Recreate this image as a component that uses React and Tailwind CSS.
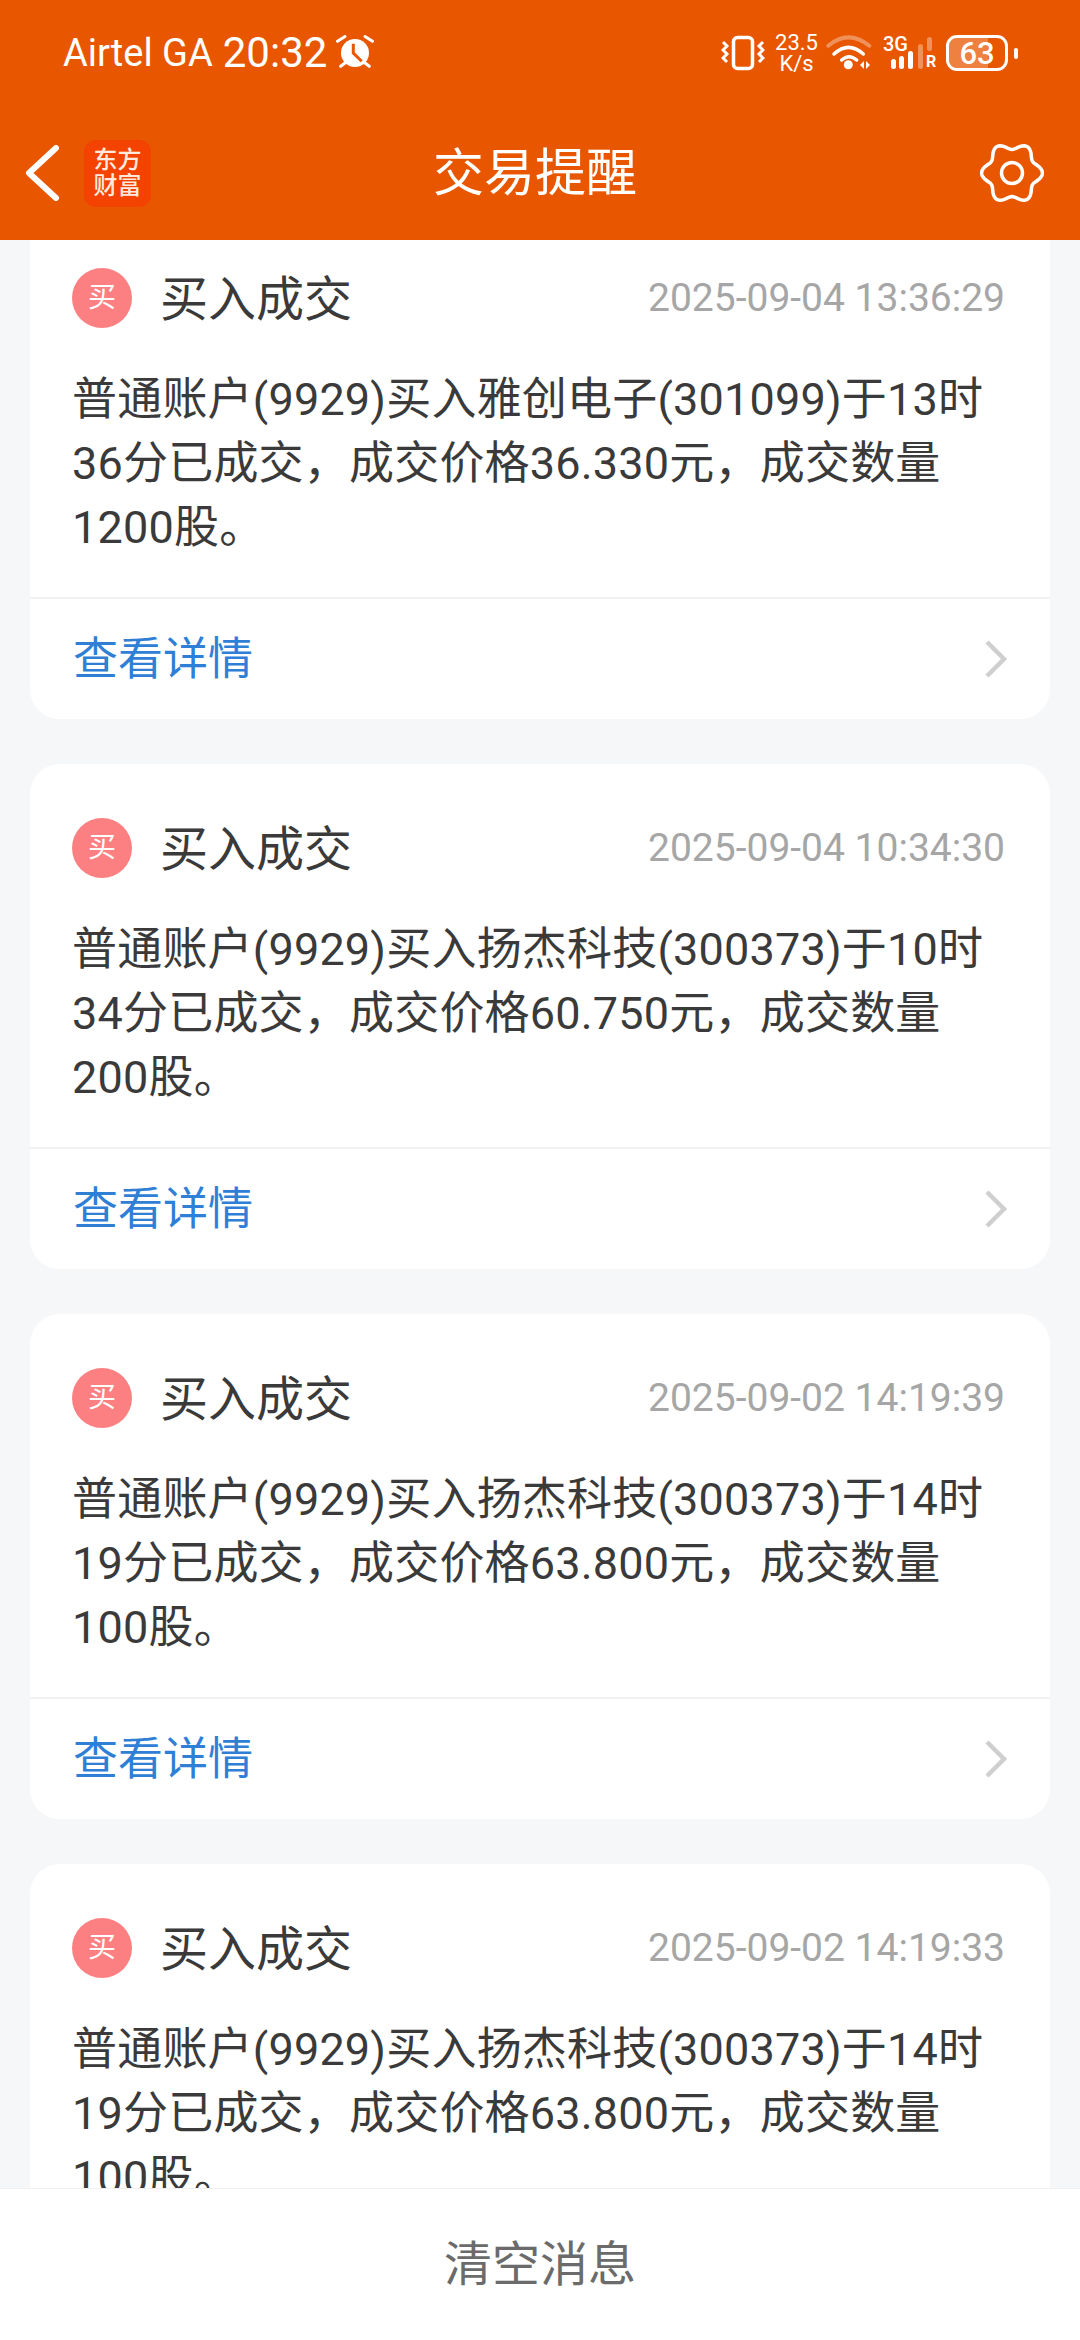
import React from "react";

const messages = [
  { time: "2025-09-04 13:36:29", stock: "雅创电子(301099)", hour: "13", min: "36", price: "36.330", qty: "1200" },
  { time: "2025-09-04 10:34:30", stock: "扬杰科技(300373)", hour: "10", min: "34", price: "60.750", qty: "200" },
  { time: "2025-09-02 14:19:39", stock: "扬杰科技(300373)", hour: "14", min: "19", price: "63.800", qty: "100" },
  { time: "2025-09-02 14:19:33", stock: "扬杰科技(300373)", hour: "14", min: "19", price: "63.800", qty: "100" },
];

// six rounded lobes around the centre of a 64 box
const gearPath = () => {
  const pts = [];
  for (let i = 0; i < 120; i++) {
    const a = (i / 120) * Math.PI * 2;
    const r = 27 + 3.4 * Math.cos(6 * a);
    pts.push(`${(32 + r * Math.cos(a)).toFixed(2)} ${(32 + r * Math.sin(a)).toFixed(2)}`);
  }
  return `M${pts.join("L")}Z`;
};

function AlarmIcon() {
  return (
    <svg width="40" height="38" viewBox="0 0 40 38" className="ml-[9px]">
      <circle cx="19" cy="19" r="14" fill="#fff" />
      <path d="M17.3 9.7V19l8.4 8.3" fill="none" stroke="#E85600" strokeWidth="3" />
      <path d="M1.5 7.3L9 2.5M29 2.5l7.5 4.8M4.7 32.3L9 29M33.3 32.3L29 29" stroke="#fff" strokeWidth="3" strokeLinecap="round" fill="none" />
    </svg>
  );
}

function VibrateIcon() {
  return (
    <svg width="44" height="36" viewBox="0 0 44 36">
      <rect x="12.5" y="2.5" width="19" height="31" rx="4" fill="none" stroke="#fff" strokeWidth="3.5" />
      <path d="M2 7l4 4-4 4 4 4-4 4 4 4M42 7l-4 4 4 4-4 4 4 4-4 4" fill="none" stroke="#fff" strokeWidth="3" />
    </svg>
  );
}

function WifiIcon() {
  return (
    <svg width="46" height="36" viewBox="0 0 46 36">
      <path d="M2.3 10.7Q22.3 -6 43.3 10.7" fill="none" stroke="#fff" strokeOpacity="0.35" strokeWidth="4" strokeLinecap="round" />
      <path d="M8 19Q22.5 5.6 37.3 19M15.7 25Q23 18.4 30.7 25" fill="none" stroke="#fff" strokeWidth="3.5" strokeLinecap="round" />
      <circle cx="22.3" cy="29.7" r="4.5" fill="#fff" />
      <path d="M38 26l-4 4 4 4zM40 26l4 4-4 4z" fill="#fff" />
    </svg>
  );
}

function SignalIcon() {
  return (
    <div className="relative h-[34px] w-[54px]">
      <span className="absolute left-0 top-[-2px] text-[20px] font-medium leading-none">3G</span>
      <svg width="54" height="34" viewBox="0 0 54 34" className="absolute inset-0">
        <rect x="8" y="23" width="5" height="10" rx="2.5" fill="#fff" />
        <rect x="16" y="20" width="5" height="13" rx="2.5" fill="#fff" />
        <rect x="25" y="15" width="5" height="18" rx="2.5" fill="#fff" />
        <rect x="35" y="8" width="5" height="25" rx="2.5" fill="#fff" fillOpacity="0.35" />
        <rect x="44" y="1" width="5" height="14" rx="2.5" fill="#fff" fillOpacity="0.35" />
      </svg>
      <span className="absolute bottom-0 left-[43px] text-[16px] font-bold leading-none">R</span>
    </div>
  );
}

function StatusBar() {
  return (
    <div className="flex h-[106px] items-center justify-between pl-[63px] pr-[62px] text-white">
      <div className="flex items-center">
        <span className="text-[38px] leading-none">Airtel GA</span>
        <span className="ml-[10px] text-[42px] leading-none">20:32</span>
        <AlarmIcon />
      </div>
      <div className="flex items-center">
        <VibrateIcon />
        <div className="ml-[10px] flex w-[43px] flex-col items-center text-[22px] leading-[21px]">
          <span>23.5</span>
          <span>K/s</span>
        </div>
        <div className="ml-[8px]">
          <WifiIcon />
        </div>
        <div className="ml-[11px]">
          <SignalIcon />
        </div>
        <div className="ml-[9px] flex items-center gap-[6px]">
          <div className="relative flex h-[36px] w-[62px] items-center justify-center overflow-hidden rounded-[11px] border-[3px] border-white text-[31px] font-medium">
            <div className="absolute inset-y-0 left-0 w-[70%] bg-white/25" />
            <span className="relative leading-none">63</span>
          </div>
          <div className="h-[11px] w-[4px] rounded-full bg-white" />
        </div>
      </div>
    </div>
  );
}

function NavBar() {
  return (
    <div className="flex h-[134px] items-center px-[26px] text-white">
      <div className="flex flex-1 items-center gap-[22px]">
        <svg width="36" height="56" viewBox="0 0 36 56">
          <path d="M30 3L3 28l27 25" fill="none" stroke="#fff" strokeWidth="6" strokeLinecap="round" strokeLinejoin="round" />
        </svg>
        <div className="flex h-[67px] w-[67px] items-center justify-center rounded-[12px] bg-[#F44200] text-center text-[24px] font-medium leading-[26px] text-[#FFE9DF]">
          东方<br />财富
        </div>
      </div>
      <div className="text-[51px] leading-none">交易提醒</div>
      <div className="flex flex-1 justify-end pr-[10px]">
        <svg width="64" height="64" viewBox="0 0 64 64">
          <path d={gearPath()} fill="none" stroke="#fff" strokeWidth="3.5" strokeLinejoin="round" />
          <circle cx="32" cy="32" r="10.5" fill="none" stroke="#fff" strokeWidth="3.5" />
        </svg>
      </div>
    </div>
  );
}

function MessageCard({ msg, className }) {
  return (
    <div className={`h-[505px] shrink-0 overflow-hidden rounded-[30px] bg-white ${className}`}>
      <div className="h-[385px] border-b-2 border-[#F1F1F3] pl-[42px] pr-[45px] pt-[54px]">
        <div className="flex items-center">
          <div className="flex h-[60px] w-[60px] items-center justify-center rounded-full bg-[#FC8082] text-[28px] text-white">买</div>
          <div className="ml-[28px] mt-[3px] text-[48px] leading-none text-[#3A3A3A]">买入成交</div>
          <div className="ml-auto text-[39px] leading-none text-[#A6A6A6]">{msg.time}</div>
        </div>
        <p className="mt-[40px] whitespace-nowrap text-[45px] leading-[64px] tracking-[0.2px] text-[#3A3A3A]">
          普通账户(9929)买入{msg.stock}于{msg.hour}时<br />
          {msg.min}分已成交，成交价格{msg.price}元，成交数量<br />
          {msg.qty}股。
        </p>
      </div>
      <div className="flex h-[120px] items-center justify-between pl-[43px] pr-[42px]">
        <span className="text-[45px] leading-none text-[#2F7FD6]">查看详情</span>
        <svg width="24" height="38" viewBox="0 0 24 38">
          <path d="M3 2l17 17L3 36" fill="none" stroke="#CFCFCF" strokeWidth="4.5" />
        </svg>
      </div>
    </div>
  );
}

export default function App() {
  return (
    <div className="flex h-[2340px] w-[1080px] flex-col overflow-hidden bg-[#F6F7F9] font-['Roboto','Noto_Sans_CJK_SC',sans-serif]">
      <header className="h-[240px] shrink-0 bg-[#E85600]">
        <StatusBar />
        <NavBar />
      </header>
      <main className="flex min-h-0 flex-1 flex-col gap-[45px] overflow-hidden px-[30px]">
        {messages.map((msg, i) => (
          <MessageCard key={msg.time} msg={msg} className={i === 0 ? "-mt-[26px]" : ""} />
        ))}
      </main>
      <footer className="flex h-[152px] shrink-0 items-center justify-center border-t border-[#EFEFEF] bg-white">
        <span className="text-[48px] leading-none text-[#6B6B6B]">清空消息</span>
      </footer>
    </div>
  );
}
